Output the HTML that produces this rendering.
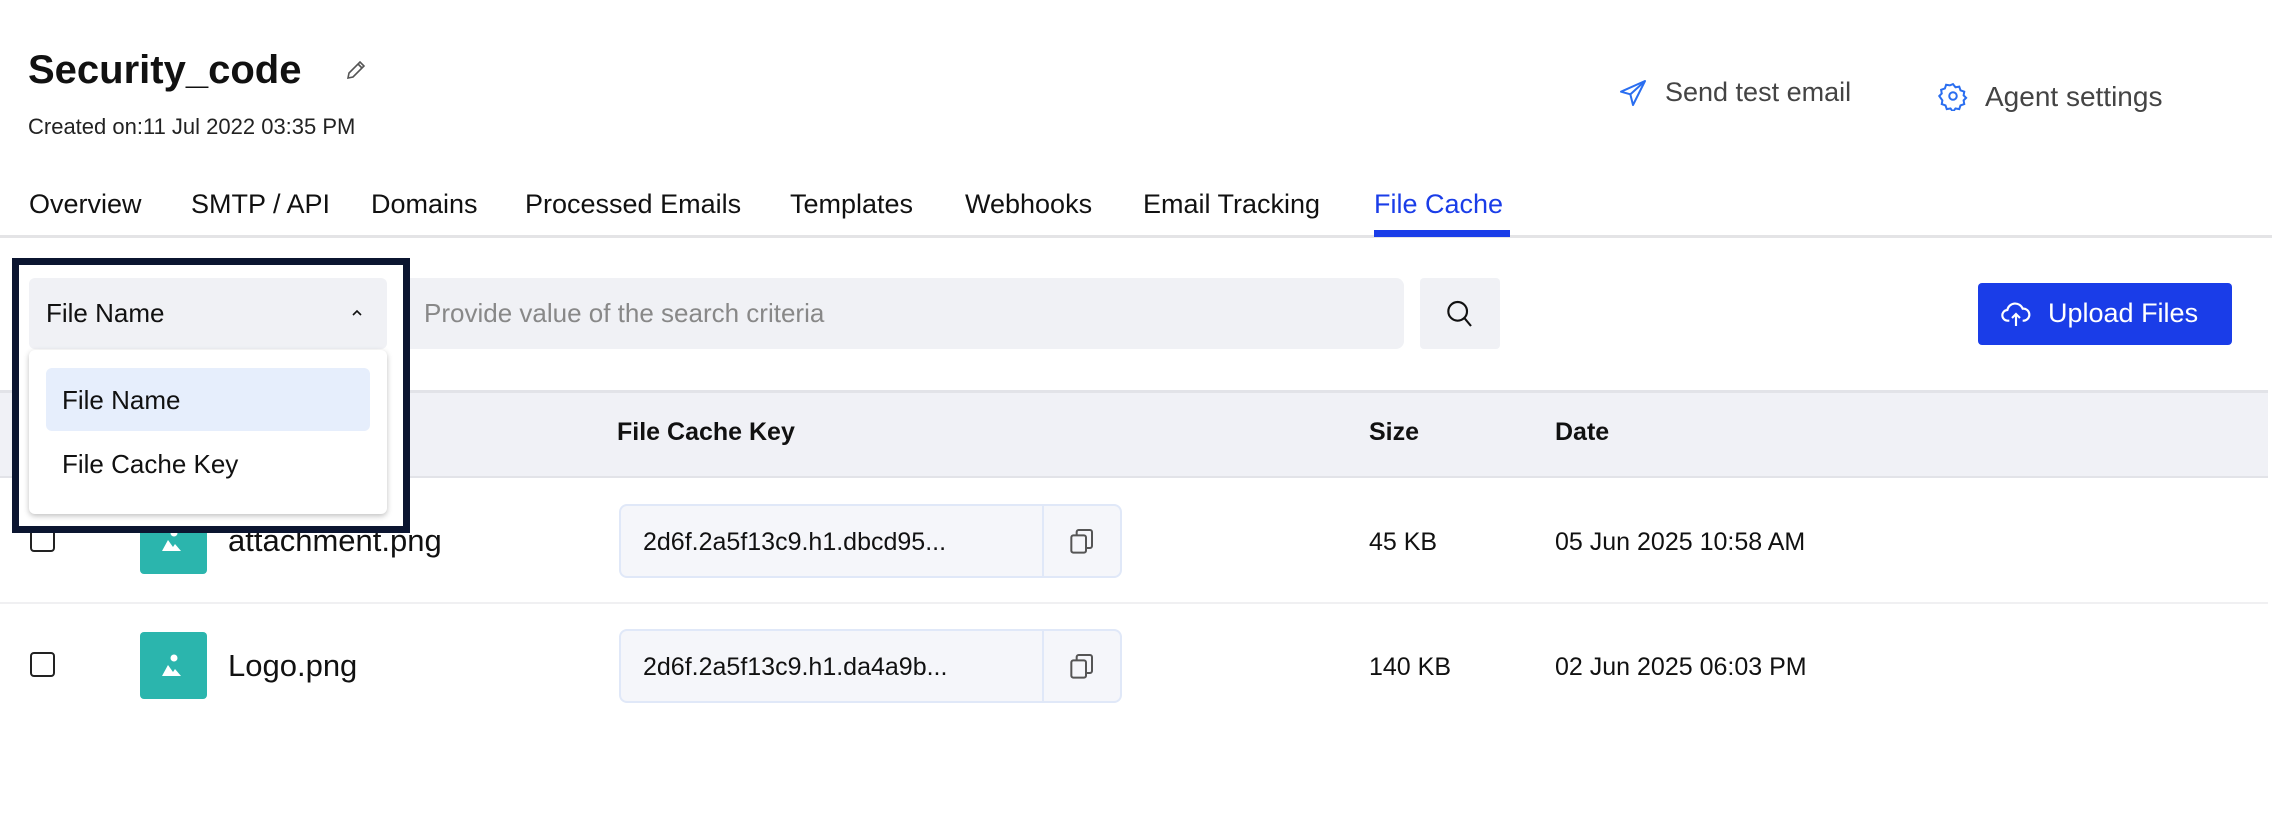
<!DOCTYPE html>
<html><head><meta charset="utf-8"><style>
*{box-sizing:border-box;margin:0;padding:0}
body{width:2272px;height:832px;background:#fff;font-family:"Liberation Sans",sans-serif;color:#111;position:relative;overflow:hidden}
.a{position:absolute;white-space:nowrap}
.tab{position:absolute;top:189px;font-size:27px;color:#111}
.hd{font-weight:bold;font-size:25px;top:418px}
.cell{font-size:25px}
.key{position:absolute;left:619px;width:503px;height:74px;background:#f5f6fa;border:2px solid #e0e8f8;border-radius:8px}
.key span{position:absolute;left:22px;top:22px;font-size:25px}
.key i{position:absolute;left:421px;top:0;bottom:0;border-left:2px solid #e0e8f8}
.tile{position:absolute;left:140px;width:67px;height:67px;background:#2bb5ad;border-radius:4px}
.cb{position:absolute;left:30px;width:25px;height:25px;border:2.5px solid #222;border-radius:4px}
</style></head><body>
<div class="a" style="left:28px;top:48px;font-size:40px;font-weight:bold">Security_code</div>
<svg class="a" style="left:344px;top:58px" width="24" height="24" viewBox="0 0 24 24" fill="none" stroke="#555" stroke-width="1.6"><path d="M4 20l1-5L16 4l4 4L9 19z"/><path d="M14 6l4 4"/></svg>
<div class="a" style="left:28px;top:114px;font-size:22px;color:#222">Created on:11 Jul 2022 03:35 PM</div>

<svg class="a" style="left:1617px;top:76px" width="32" height="34" viewBox="0 0 24 24" fill="none" stroke="#2a6ef0" stroke-width="1.5" stroke-linejoin="round"><path d="M21 3L3 11l7 2 2 8z"/><path d="M21 3L10 13"/></svg>
<div class="a" style="left:1665px;top:77px;font-size:27px;color:#444">Send test email</div>
<svg class="a" style="left:1938px;top:81px" width="30" height="30" viewBox="0 0 24 24" fill="none" stroke="#2a6ef0" stroke-width="1.6"><circle cx="12" cy="12" r="3"/><path d="M12 2.5l2 2.5 3-.5 1 3 3 1-.5 3 2 2-2 2 .5 3-3 1-1 3-3-.5-2 2.5-2-2.5-3 .5-1-3-3-1 .5-3L1 12l2-2-.5-3 3-1 1-3 3 .5z"/></svg>
<div class="a" style="left:1985px;top:81px;font-size:28px;color:#444">Agent settings</div>

<div class="tab" style="left:29px">Overview</div>
<div class="tab" style="left:191px">SMTP / API</div>
<div class="tab" style="left:371px">Domains</div>
<div class="tab" style="left:525px">Processed Emails</div>
<div class="tab" style="left:790px">Templates</div>
<div class="tab" style="left:965px">Webhooks</div>
<div class="tab" style="left:1143px">Email Tracking</div>
<div class="tab" style="left:1374px;color:#1a3de8">File Cache</div>
<div class="a" style="left:0;top:235px;width:2272px;height:3px;background:#e4e4e6"></div>
<div class="a" style="left:1374px;top:230px;width:136px;height:7px;background:#1a3de8"></div>

<div class="a" style="left:409px;top:278px;width:995px;height:71px;background:#f0f1f5;border-radius:0 8px 8px 0"></div>
<div class="a" style="left:424px;top:298px;font-size:26px;color:#888">Provide value of the search criteria</div>
<div class="a" style="left:1420px;top:278px;width:80px;height:71px;background:#f0f1f5;border-radius:4px"></div>
<svg class="a" style="left:1443px;top:298px" width="32" height="32" viewBox="0 0 24 24" fill="none" stroke="#111" stroke-width="1.6"><circle cx="11" cy="10" r="7"/><path d="M16 15l5 6"/></svg>
<div class="a" style="left:1978px;top:283px;width:254px;height:62px;background:#1a3de8;border-radius:4px"></div>
<svg class="a" style="left:2000px;top:298px" width="32" height="32" viewBox="0 0 24 24" fill="none" stroke="#fff" stroke-width="1.6"><path d="M7 17H6a4 4 0 0 1-.5-8A6 6 0 0 1 17 8a4.5 4.5 0 0 1 1 9h-1"/><path d="M12 21v-9M9 15l3-3 3 3"/></svg>
<div class="a" style="left:2048px;top:298px;font-size:27px;color:#fff">Upload Files</div>

<div class="a" style="left:0;top:390px;width:2268px;height:88px;background:#f0f1f6;border-top:3px solid #e2e3e8;border-bottom:2px solid #e2e3e8"></div>
<div class="a hd" style="left:617px">File Cache Key</div>
<div class="a hd" style="left:1369px">Size</div>
<div class="a hd" style="left:1555px">Date</div>

<div class="cb" style="top:527px"></div>
<div class="tile" style="top:507px"><svg width="67" height="67" viewBox="0 0 67 67"><circle cx="34" cy="26" r="3.5" fill="#fff"/><path d="M22 44l6-11 5 7 2-3 6 7z" fill="#fff"/></svg></div>
<div class="a" style="left:228px;top:523px;font-size:31px">attachment.png</div>
<div class="key" style="top:504px"><span>2d6f.2a5f13c9.h1.dbcd95...</span><i></i></div>
<svg class="a" style="left:1066px;top:526px" width="32" height="32" viewBox="0 0 24 24" fill="none" stroke="#555" stroke-width="1.5"><rect x="4" y="7" width="11" height="13" rx="1.5"/><path d="M8 7V4.5A1.5 1.5 0 0 1 9.5 3H18a1.5 1.5 0 0 1 1.5 1.5V15A1.5 1.5 0 0 1 18 16.5h-3"/></svg>
<div class="a cell" style="left:1369px;top:528px">45 KB</div>
<div class="a cell" style="left:1555px;top:528px">05 Jun 2025 10:58 AM</div>
<div class="a" style="left:0;top:602px;width:2268px;height:2px;background:#f0f0f2"></div>

<div class="cb" style="top:652px"></div>
<div class="tile" style="top:632px"><svg width="67" height="67" viewBox="0 0 67 67"><circle cx="34" cy="26" r="3.5" fill="#fff"/><path d="M22 44l6-11 5 7 2-3 6 7z" fill="#fff"/></svg></div>
<div class="a" style="left:228px;top:648px;font-size:31px">Logo.png</div>
<div class="key" style="top:629px"><span>2d6f.2a5f13c9.h1.da4a9b...</span><i></i></div>
<svg class="a" style="left:1066px;top:651px" width="32" height="32" viewBox="0 0 24 24" fill="none" stroke="#555" stroke-width="1.5"><rect x="4" y="7" width="11" height="13" rx="1.5"/><path d="M8 7V4.5A1.5 1.5 0 0 1 9.5 3H18a1.5 1.5 0 0 1 1.5 1.5V15A1.5 1.5 0 0 1 18 16.5h-3"/></svg>
<div class="a cell" style="left:1369px;top:653px">140 KB</div>
<div class="a cell" style="left:1555px;top:653px">02 Jun 2025 06:03 PM</div>

<div class="a" style="left:12px;top:258px;width:398px;height:275px;border:7px solid #0b1530;background:#fff"></div>
<div class="a" style="left:29px;top:278px;width:358px;height:71px;background:#f0f1f5;border-radius:6px"></div>
<div class="a" style="left:46px;top:298px;font-size:26px">File Name</div>
<svg class="a" style="left:350px;top:307px" width="14" height="12" viewBox="0 0 14 12" fill="none" stroke="#111" stroke-width="1.6"><path d="M3 8l4-4 4 4"/></svg>
<div class="a" style="left:29px;top:350px;width:358px;height:164px;background:#fff;border-radius:6px;box-shadow:0 2px 6px rgba(0,0,0,.25)"></div>
<div class="a" style="left:46px;top:368px;width:324px;height:63px;background:#e6eefc;border-radius:6px"></div>
<div class="a" style="left:62px;top:385px;font-size:26px">File Name</div>
<div class="a" style="left:62px;top:449px;font-size:26px">File Cache Key</div>
</body></html>
